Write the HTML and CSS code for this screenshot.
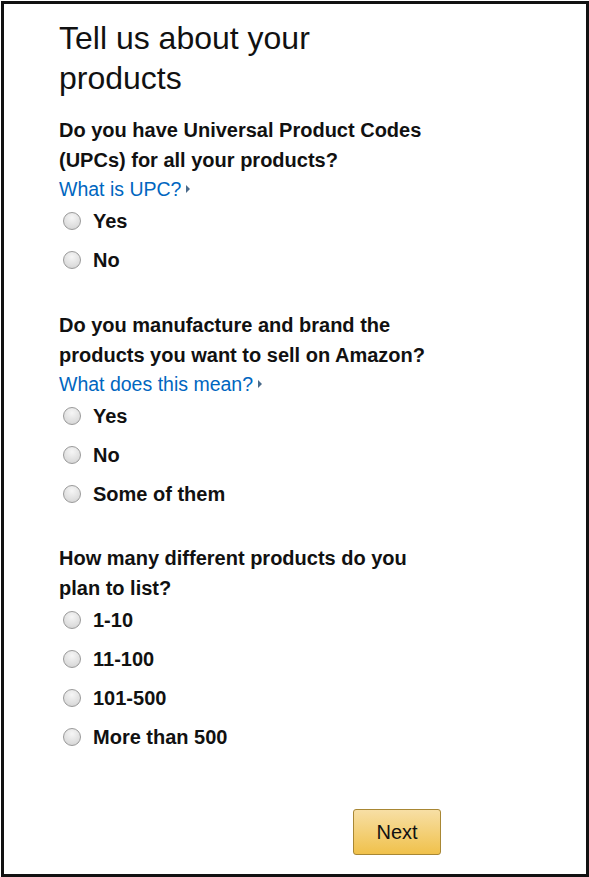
FILE: index.html
```html
<!DOCTYPE html>
<html>
<head>
<meta charset="utf-8">
<link rel="stylesheet" href="styles.css">
</head>
<body>
<div class="frame">
  <div class="col">
    <h1 class="title">Tell us about your products</h1>

    <div class="q q1">
      <div class="qtext">Do you have Universal Product Codes (UPCs) for all your products?</div>
      <a class="help" href="#">What is UPC?<span class="caret"></span></a>
      <div class="opts">
        <label class="opt"><span class="radio"></span>Yes</label>
        <label class="opt"><span class="radio"></span>No</label>
      </div>
    </div>

    <div class="q q2">
      <div class="qtext">Do you manufacture and brand the products you want to sell on Amazon?</div>
      <a class="help" href="#">What does this mean?<span class="caret"></span></a>
      <div class="opts">
        <label class="opt"><span class="radio"></span>Yes</label>
        <label class="opt"><span class="radio"></span>No</label>
        <label class="opt"><span class="radio"></span>Some of them</label>
      </div>
    </div>

    <div class="q q3">
      <div class="qtext">How many different products do you plan to list?</div>
      <div class="opts">
        <label class="opt"><span class="radio"></span>1-10</label>
        <label class="opt"><span class="radio"></span>11-100</label>
        <label class="opt"><span class="radio"></span>101-500</label>
        <label class="opt"><span class="radio"></span>More than 500</label>
      </div>
    </div>

    <div class="actions">
      <button class="next">Next</button>
    </div>
  </div>
</div>
</body>
</html>
```
FILE: styles.css
```css
html, body {
  margin: 0;
  padding: 0;
  background: #fff;
}
body {
  padding: 1px;
  font-family: "Liberation Sans", Arial, sans-serif;
  color: #111;
}
.frame {
  box-sizing: border-box;
  width: 588px;
  height: 876px;
  border: 3px solid #111;
  padding-left: 55px;
}
.col {
  width: 382px;
}
.title {
  margin: 14px 0 0 0;
  font-size: 32px;
  line-height: 40px;
  font-weight: normal;
}
.q {
  margin-top: 17px;
}
.q2 {
  margin-top: 38px;
}
.q3 {
  margin-top: 37px;
}
.qtext {
  font-size: 20px;
  font-weight: bold;
  line-height: 30px;
}
.help {
  display: block;
  font-size: 19.5px;
  line-height: 28px;
  color: #0066c0;
  text-decoration: none;
}
.caret {
  display: inline-block;
  width: 0;
  height: 0;
  margin-left: 5px;
  border-top: 4px solid transparent;
  border-bottom: 4px solid transparent;
  border-left: 4px solid #4a6a8a;
  vertical-align: 3px;
}
.opts {
  display: flex;
  flex-direction: column;
  gap: 15px;
  margin-top: 6px;
}
.q3 .opts {
  margin-top: 5px;
}
.opt {
  display: flex;
  align-items: center;
  height: 24px;
  font-size: 20px;
  font-weight: bold;
}
.radio {
  box-sizing: border-box;
  width: 18px;
  height: 18px;
  border-radius: 50%;
  border: 1px solid #9a9a9a;
  background: radial-gradient(circle at 50% 30%, #f6f6f6 0%, #dedede 65%, #cccccc 100%);
  margin-left: 4px;
  margin-right: 12px;
  flex: none;
}
.actions {
  display: flex;
  justify-content: flex-end;
  margin-top: 60px;
}
.next {
  box-sizing: border-box;
  width: 88px;
  height: 46px;
  border: 1px solid #a88734;
  border-radius: 3px;
  background: linear-gradient(to bottom, #f7dfa5, #f0c14b);
  font-family: "Liberation Sans", Arial, sans-serif;
  font-size: 20px;
  color: #111;
  padding: 0;
}
```
